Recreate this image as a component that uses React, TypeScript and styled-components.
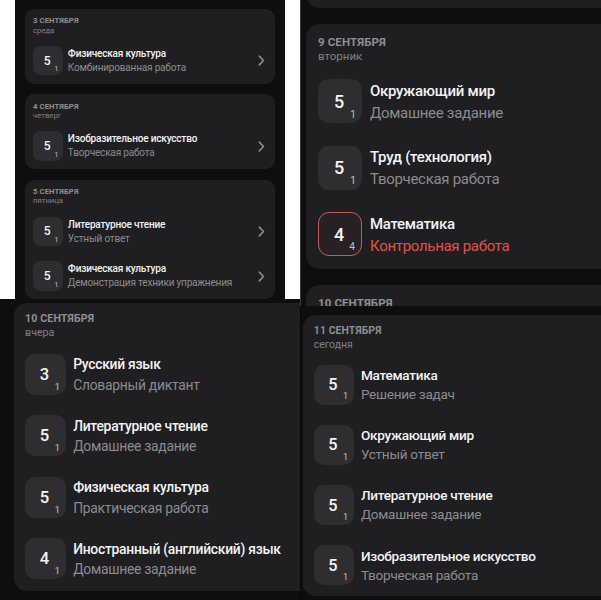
import React from 'react';
import styled, { createGlobalStyle, css } from 'styled-components';

const GlobalStyle = createGlobalStyle`
  html, body { margin: 0; padding: 0; background: #ffffff; }
  body {
    font-family: Roboto, "Noto Sans", sans-serif;
    -webkit-font-smoothing: antialiased;
  }
`;

type Mark = { grade: string; weight: string; subject: string; work: string; bad?: boolean };
type Day = { date: string; weekday: string; marks: Mark[] };
type S = { $s: number };

// every size is given for the biggest shot and scaled per panel
const px = (v: number) => (p: S) => `${(v * p.$s).toFixed(2)}px`;

const tl: Day[] = [
    { date: '3 сентября', weekday: 'среда', marks: [
        { grade: '5', weight: '1', subject: 'Физическая культура', work: 'Комбинированная работа' },
    ] },
    { date: '4 сентября', weekday: 'четверг', marks: [
        { grade: '5', weight: '1', subject: 'Изобразительное искусство', work: 'Творческая работа' },
    ] },
    { date: '5 сентября', weekday: 'пятница', marks: [
        { grade: '5', weight: '1', subject: 'Литературное чтение', work: 'Устный ответ' },
        { grade: '5', weight: '1', subject: 'Физическая культура', work: 'Демонстрация техники упражнения' },
    ] },
];

const tr: Day[] = [
    { date: '9 сентября', weekday: 'вторник', marks: [
        { grade: '5', weight: '1', subject: 'Окружающий мир', work: 'Домашнее задание' },
        { grade: '5', weight: '1', subject: 'Труд (технология)', work: 'Творческая работа' },
        { grade: '4', weight: '4', subject: 'Математика', work: 'Контрольная работа', bad: true },
    ] },
    { date: '10 сентября', weekday: 'вчера', marks: [
        { grade: '3', weight: '1', subject: 'Русский язык', work: 'Словарный диктант' },
    ] },
];

const bl: Day[] = [
    { date: '10 сентября', weekday: 'вчера', marks: [
        { grade: '3', weight: '1', subject: 'Русский язык', work: 'Словарный диктант' },
        { grade: '5', weight: '1', subject: 'Литературное чтение', work: 'Домашнее задание' },
        { grade: '5', weight: '1', subject: 'Физическая культура', work: 'Практическая работа' },
        { grade: '4', weight: '1', subject: 'Иностранный (английский) язык', work: 'Домашнее задание' },
    ] },
];

const br: Day[] = [
    { date: '11 сентября', weekday: 'сегодня', marks: [
        { grade: '5', weight: '1', subject: 'Математика', work: 'Решение задач' },
        { grade: '5', weight: '1', subject: 'Окружающий мир', work: 'Устный ответ' },
        { grade: '5', weight: '1', subject: 'Литературное чтение', work: 'Домашнее задание' },
        { grade: '5', weight: '1', subject: 'Изобразительное искусство', work: 'Творческая работа' },
    ] },
];

const Chevron: React.FC<{ size: number }> = ({ size }) => (
    <svg width={size * 0.6} height={size} viewBox="0 0 6 10" fill="none">
        <path d="M1.2 1 L5 5 L1.2 9" stroke="#8e8e93" strokeWidth="1.4" strokeLinecap="round" strokeLinejoin="round" />
    </svg>
);

const DayCard: React.FC<{ day: Day; s: number }> = ({ day, s }) => (
    <Card $s={s}>
        <DateLabel $s={s}>{day.date}</DateLabel>
        <Weekday $s={s}>{day.weekday}</Weekday>
        <Rows $s={s}>
            {day.marks.map((m, i) => (
                <Row key={i} $s={s}>
                    <GradeBox $s={s} $bad={m.bad}>
                        {m.grade}
                        <WeightBadge $s={s}>{m.weight}</WeightBadge>
                    </GradeBox>
                    <Texts $s={s}>
                        <Subject $s={s}>{m.subject}</Subject>
                        <Work $s={s} $bad={m.bad}>{m.work}</Work>
                    </Texts>
                    <Arrow $s={s}><Chevron size={11 * s / 0.67} /></Arrow>
                </Row>
            ))}
        </Rows>
    </Card>
);

const App: React.FC = () => {
    return (
        <>
            <GlobalStyle />
            <Collage>
                <LeftCol>
                    <TopLeftSlot>
                        <Panel $h={299}>
                            <Feed $s={0.67} $top={9} $left={10}>
                                {tl.map((d) => <DayCard key={d.date} day={d} s={0.67} />)}
                            </Feed>
                        </Panel>
                    </TopLeftSlot>
                    <Panel $h={301}>
                        <Feed $s={0.925} $top={4} $left={14}>
                            {bl.map((d) => <DayCard key={d.date} day={d} s={0.925} />)}
                        </Feed>
                    </Panel>
                </LeftCol>
                <RightCol>
                    <Panel $h={306} $edge="#3b3b3e">
                        <Feed $s={1} $top={-30} $left={5}>
                            <CardStub $s={1} $h={38} />
                            {tr.map((d) => <DayCard key={d.date} day={d} s={1} />)}
                        </Feed>
                    </Panel>
                    <Panel $h={294} $edge="#060607">
                        <Feed $s={0.905} $top={9} $left={2}>
                            {br.map((d) => <DayCard key={d.date} day={d} s={0.905} />)}
                        </Feed>
                    </Panel>
                </RightCol>
            </Collage>
        </>
    );
}

const Collage = styled.div`
    width: 601px;
    height: 600px;
    display: flex;
    overflow: hidden;
`

const LeftCol = styled.div`
    width: 300px;
    flex: none;
    display: flex;
    flex-direction: column;
`

const RightCol = styled.div`
    width: 301px;
    flex: none;
    display: flex;
    flex-direction: column;
`

const TopLeftSlot = styled.div`
    height: 300px;
    padding: 0 15px;
    box-sizing: border-box;
    background: #ffffff;
`

const Panel = styled.div<{ $h: number; $edge?: string }>`
    height: ${(p) => p.$h}px;
    flex: none;
    overflow: hidden;
    background: #0e0e10;
    box-sizing: border-box;
    ${(p) => p.$edge && css`border-left: 1px solid ${p.$edge};`}
`

const Feed = styled.div<S & { $top: number; $left: number }>`
    display: flex;
    flex-direction: column;
    align-items: flex-start;
    gap: ${px(16)};
    margin-top: ${(p) => p.$top}px;
    padding-left: ${(p) => p.$left}px;
`

const Card = styled.div<S>`
    width: ${px(373)};
    flex: none;
    box-sizing: border-box;
    background: #1f1f21;
    border-radius: ${px(14)};
    padding: ${px(11)} ${px(15)} ${px(12)} ${px(12)};
`

const CardStub = styled(Card)<{ $h: number }>`
    height: ${(p) => p.$h}px;
    padding: 0;
`

const DateLabel = styled.div<S>`
    font-size: ${px(11.5)};
    line-height: ${px(14)};
    font-weight: 700;
    color: #8e8e93;
    text-transform: uppercase;
    letter-spacing: 0.01em;
`

const Weekday = styled.div<S>`
    font-size: ${px(11.5)};
    line-height: ${px(15)};
    color: #808085;
`

const Rows = styled.div<S>`
    margin-top: ${px(15)};
    display: flex;
    flex-direction: column;
    gap: ${px(22)};
`

const Row = styled.div<S>`
    display: flex;
    align-items: flex-start;
    gap: ${px(8)};
`

const GradeBox = styled.div<S & { $bad?: boolean }>`
    position: relative;
    flex: none;
    width: ${px(44)};
    height: ${px(44)};
    box-sizing: border-box;
    border-radius: ${px(11)};
    background: #2e2e31;
    display: flex;
    align-items: center;
    justify-content: center;
    padding-right: ${px(2)};
    font-size: ${px(18)};
    font-weight: 500;
    color: #f4f4f6;
    ${(p) => p.$bad && css`
        background: #272124;
        border: 1.5px solid #c65d58;
    `}
`

const WeightBadge = styled.div<S>`
    position: absolute;
    right: ${px(3)};
    bottom: ${px(2)};
    width: ${px(12)};
    height: ${px(14)};
    display: flex;
    align-items: center;
    justify-content: center;
    font-size: ${px(10)};
    font-weight: 400;
    color: #c4c4c8;
`

const Texts = styled.div<S>`
    display: flex;
    flex-direction: column;
    min-width: 0;
    flex: 1;
    padding-top: ${px(1.5)};
`

const Subject = styled.div<S>`
    font-size: ${px(15)};
    line-height: ${px(20)};
    font-weight: 500;
    letter-spacing: -0.02em;
    color: #f2f2f4;
    white-space: nowrap;
`

const Work = styled.div<S & { $bad?: boolean }>`
    margin-top: ${px(1)};
    font-size: ${px(15)};
    line-height: ${px(22)};
    letter-spacing: -0.02em;
    color: ${(p) => (p.$bad ? '#e0534d' : '#8b8b90')};
    white-space: nowrap;
`

const Arrow = styled.div<S>`
    flex: none;
    align-self: center;
    display: flex;
`

export default App;
